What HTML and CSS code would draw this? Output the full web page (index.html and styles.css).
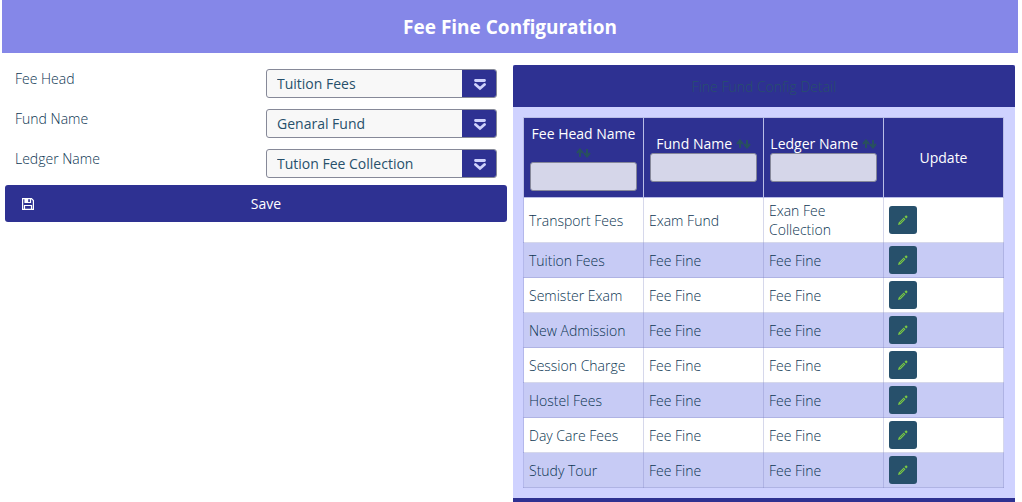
FILE: index.html
```html
<!DOCTYPE html>
<html lang="en">
<head>
<meta charset="utf-8">
<title>Fee Fine Configuration</title>
<link rel="stylesheet" href="styles.css">
</head>
<body>
<svg class="sprite" aria-hidden="true">
  <symbol id="chevron" viewBox="0 0 12 12"><path d="M1.500 1.500h9M1.500 5.500L6 9.500l4.500-4" fill="none" stroke="currentColor" stroke-width="2.800" stroke-linecap="round"/></symbol>
  <symbol id="pencil" viewBox="0 0 10 10"><path d="M0 10l.7-2.500L5.800 2.500l1.700 1.700L2.600 9.300zM6.500 1.800L7.800.6q.4-.4.800 0l.8.8q.4.400 0 .8L8.200 3.500z" fill="currentColor"/><path d="M2 8l4.200-4.200" stroke="#27506b" stroke-width=".6"/></symbol>
  <symbol id="sort" viewBox="0 0 15 10"><path d="M4 9V2M1 5l3-3.500L7 5M11 1v7M8 5l3 3.500L14 5" fill="none" stroke="currentColor" stroke-width="2"/></symbol>
</svg>
<header class="title-bar"><h1 class="title">Fee Fine Configuration</h1></header>
<main class="columns">
  <form class="config-form">
    <div class="field">
      <label class="label" for="head">Fee Head</label>
      <div class="combo"><select class="select" id="head"><option>Tuition Fees</option></select><span class="trigger"><svg class="chevron"><use href="#chevron"/></svg></span></div>
    </div>
    <div class="field">
      <label class="label" for="fund">Fund Name</label>
      <div class="combo"><select class="select" id="fund"><option>Genaral Fund</option></select><span class="trigger"><svg class="chevron"><use href="#chevron"/></svg></span></div>
    </div>
    <div class="field">
      <label class="label" for="ledger">Ledger Name</label>
      <div class="combo"><select class="select" id="ledger"><option>Tution Fee Collection</option></select><span class="trigger"><svg class="chevron"><use href="#chevron"/></svg></span></div>
    </div>
    <button class="save" type="button">
      <svg class="save-icon" viewBox="0 0 12 12" aria-hidden="true"><path d="M.6.6h8.900l1.900 1.900v8.900H.6zM3 .6v3.900h5.500V.6M2.500 11.400V7.500h7v3.900" fill="none" stroke="currentColor" stroke-width="1.200"/><path d="M3 .6h3.200v3.400H3z" fill="currentColor"/></svg>
      <span>Save</span>
    </button>
  </form>
  <section class="panel">
    <h2 class="panel-title">Fine Fund Config Detail</h2>
    <div class="panel-body">
      <table class="table">
        <thead>
          <tr>
            <th class="head"><label for="f1">Fee Head Name</label> <svg class="sort"><use href="#sort"/></svg><input class="filter" id="f1" type="text"></th>
            <th class="head"><label for="f2">Fund Name</label> <svg class="sort"><use href="#sort"/></svg><input class="filter" id="f2" type="text"></th>
            <th class="head"><label for="f3">Ledger Name</label> <svg class="sort"><use href="#sort"/></svg><input class="filter" id="f3" type="text"></th>
            <th class="head">Update</th>
          </tr>
        </thead>
        <tbody>
          <tr class="row"><td class="cell">Transport Fees</td><td class="cell">Exam Fund</td><td class="cell">Exan Fee Collection</td><td class="cell"><button class="edit" type="button" aria-label="Edit"><svg class="pencil"><use href="#pencil"/></svg></button></td></tr>
          <tr class="row"><td class="cell">Tuition Fees</td><td class="cell">Fee Fine</td><td class="cell">Fee Fine</td><td class="cell"><button class="edit" type="button" aria-label="Edit"><svg class="pencil"><use href="#pencil"/></svg></button></td></tr>
          <tr class="row"><td class="cell">Semister Exam</td><td class="cell">Fee Fine</td><td class="cell">Fee Fine</td><td class="cell"><button class="edit" type="button" aria-label="Edit"><svg class="pencil"><use href="#pencil"/></svg></button></td></tr>
          <tr class="row"><td class="cell">New Admission</td><td class="cell">Fee Fine</td><td class="cell">Fee Fine</td><td class="cell"><button class="edit" type="button" aria-label="Edit"><svg class="pencil"><use href="#pencil"/></svg></button></td></tr>
          <tr class="row"><td class="cell">Session Charge</td><td class="cell">Fee Fine</td><td class="cell">Fee Fine</td><td class="cell"><button class="edit" type="button" aria-label="Edit"><svg class="pencil"><use href="#pencil"/></svg></button></td></tr>
          <tr class="row"><td class="cell">Hostel Fees</td><td class="cell">Fee Fine</td><td class="cell">Fee Fine</td><td class="cell"><button class="edit" type="button" aria-label="Edit"><svg class="pencil"><use href="#pencil"/></svg></button></td></tr>
          <tr class="row"><td class="cell">Day Care Fees</td><td class="cell">Fee Fine</td><td class="cell">Fee Fine</td><td class="cell"><button class="edit" type="button" aria-label="Edit"><svg class="pencil"><use href="#pencil"/></svg></button></td></tr>
          <tr class="row"><td class="cell">Study Tour</td><td class="cell">Fee Fine</td><td class="cell">Fee Fine</td><td class="cell"><button class="edit" type="button" aria-label="Edit"><svg class="pencil"><use href="#pencil"/></svg></button></td></tr>
        </tbody>
      </table>
    </div>
    <div class="panel-foot"></div>
  </section>
</main>
</body>
</html>
```
FILE: styles.css
```css
* { box-sizing: border-box; }
body {
  margin: 0 4px 0 2px;
  font: 300 14px/19px "Open Sans", sans-serif;
  color: #0b3552;
  background: #fff;
}
button, input, select { font: inherit; color: inherit; }
.sprite { display: none; }
.title-bar { padding: 14px 13px 12px; background: #8587e8; text-align: center; }
.title { margin: 0; font-size: 19px; line-height: 27px; font-weight: 700; color: #fff; }
.columns { display: grid; grid-template-columns: 1fr 1fr; gap: 6px; padding: 12px 3px 0; align-items: start; }
.config-form { display: flex; flex-direction: column; }
.field { display: grid; grid-template-columns: 1fr 1fr; height: 40px; align-items: start; }
.label { padding: 4px 10px; }
.combo {
  display: flex;
  height: 29px;
  margin: 4px 10px 0;
  border: 1px solid #868998;
  border-radius: 3px;
  background: #f8f8f8;
  overflow: hidden;
}
.select { flex: 1; min-width: 0; appearance: none; border: 0; padding: 0 10px; background: none; font-weight: 400; color: #27506b; }
.trigger { width: 34px; display: flex; align-items: center; justify-content: center; padding: 3px 0 0 2px; background: #2e3192; color: #cfd2fb; }
.chevron { width: 12px; height: 12px; }
.save {
  display: grid;
  grid-template-columns: 12px 1fr;
  align-items: center;
  height: 37px;
  padding: 0 9px 0 17px;
  border: 0;
  border-radius: 3px;
  background: #2e3192;
  color: #fff;
  font-weight: 400;
}
.save-icon { width: 12px; height: 12px; }
.panel { background: #cfd2ff; }
.panel-title {
  margin: 0;
  padding: 13px 12px 11px;
  border-radius: 2px 2px 0 0;
  background: #2e3192;
  color: #27506b;
  font-size: 14px;
  line-height: 18px;
  font-weight: 300;
  text-align: center;
}
.panel-body { padding: 10px 11px 10px 10px; }
.table { width: 100%; table-layout: fixed; border-collapse: collapse; }
.head {
  height: 80px;
  padding: 6px;
  border: 1px solid #b9bde6;
  background: #2e3192;
  color: #fff;
  font-weight: 400;
  vertical-align: middle;
}
.sort { width: 15px; height: 10px; color: #28505e; }
.filter { display: block; width: 100%; height: 29px; border: 1px solid #85879a; border-radius: 3px; background: #d5d6e9; }
.row { background: #fff; }
.row:nth-child(even) { background: #c7cbf5; }
.cell { height: 35px; padding: 3px 5px; border: 1px solid rgb(120 126 190 / 30%); }
.edit { display: flex; align-items: center; justify-content: center; width: 28px; height: 28px; padding: 0; border: 0; border-radius: 3px; background: #27506b; }
.pencil { width: 10px; height: 10px; color: #7ac943; }
.panel-foot { height: 4px; background: #2e3192; }
```
